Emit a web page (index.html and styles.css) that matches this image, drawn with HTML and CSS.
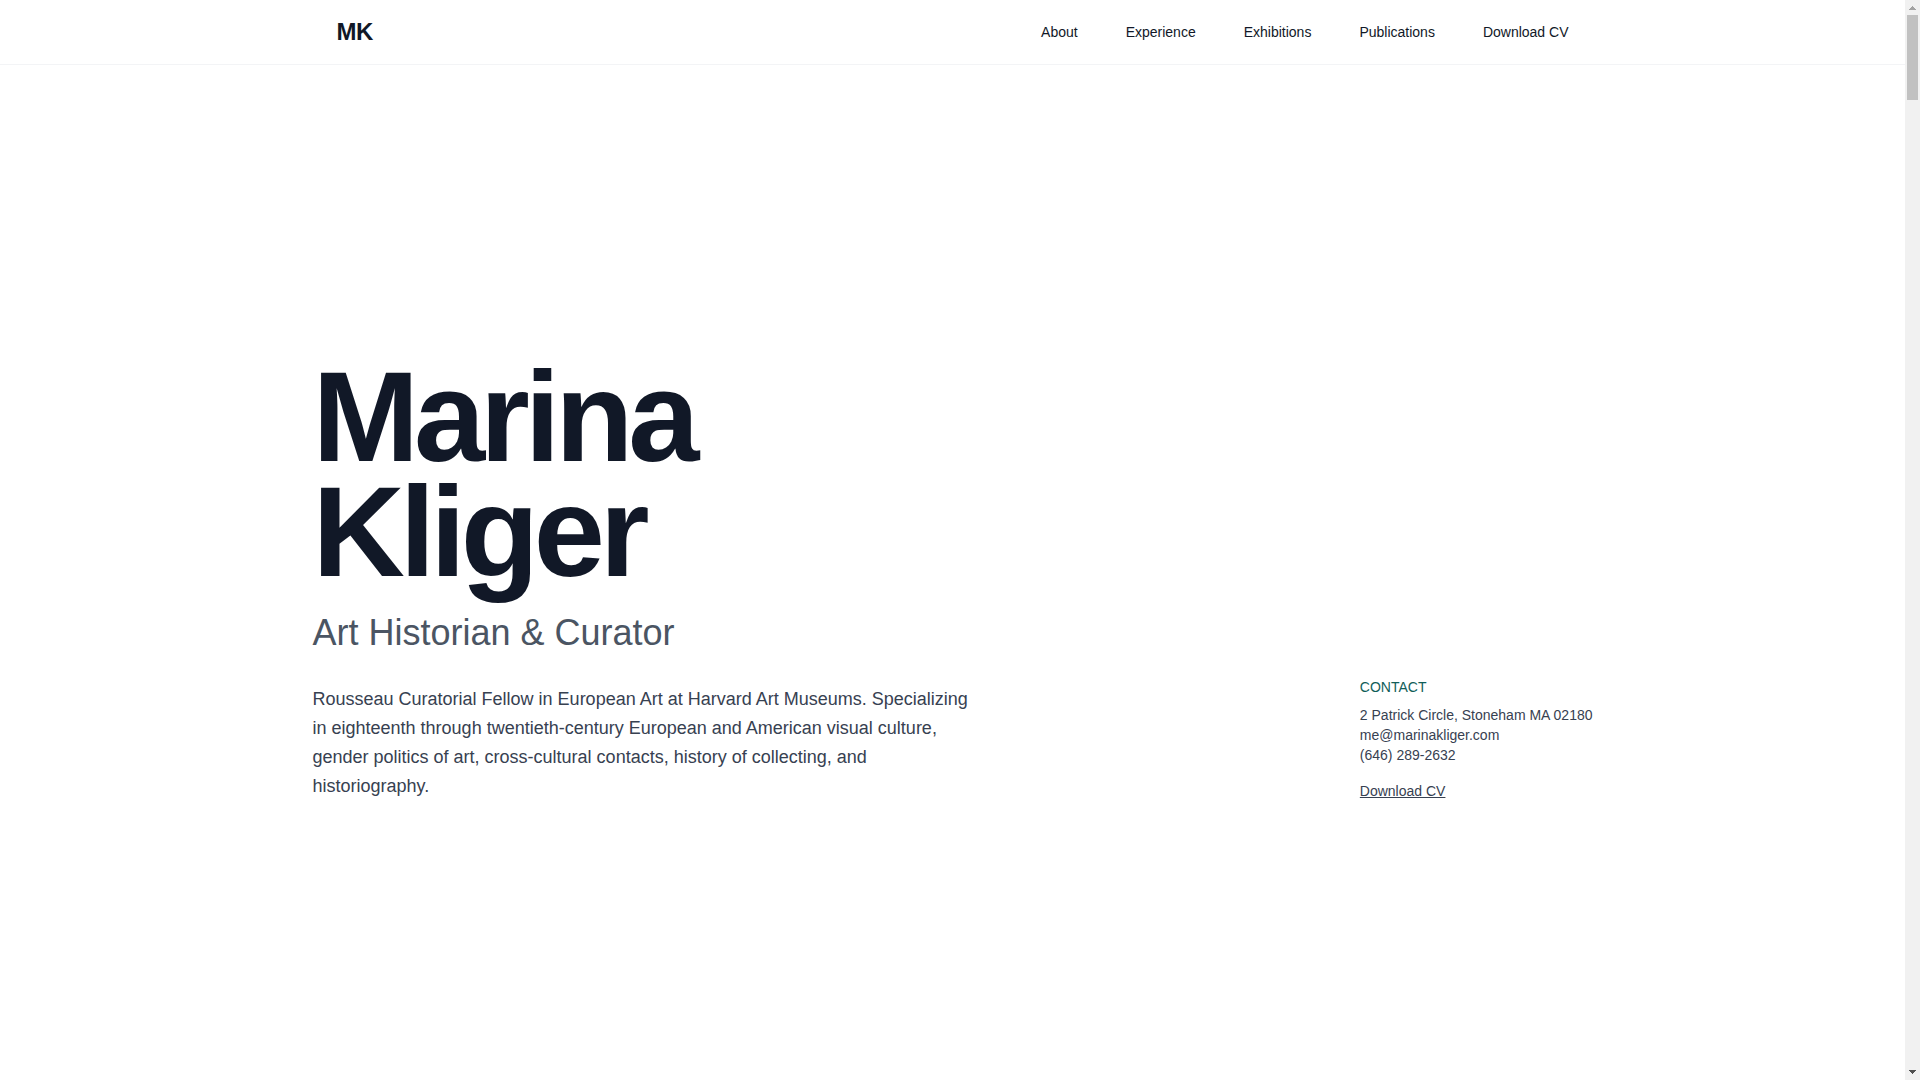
FILE: index.html
```html
<!DOCTYPE html>
<html lang="en">
<head>
  <meta charset="UTF-8" />
  <meta name="viewport" content="width=device-width, initial-scale=1.0" />
  <title>Marina Kliger</title>
  <link rel="stylesheet" href="styles.css">
</head>
<body>

<div class="page">
  <header class="site-header">
    <nav class="nav">
      <a class="logo" href="#top">MK</a>
      <ul class="nav-links">
        <li><a href="#about">About</a></li>
        <li><a href="#experience">Experience</a></li>
        <li><a href="#exhibitions">Exhibitions</a></li>
        <li><a href="#publications">Publications</a></li>
        <li><a href="#cv">Download CV</a></li>
      </ul>
    </nav>
  </header>

  <main class="hero" id="top">
    <div class="hero-inner">
      <div class="intro">
        <h1>Marina<br>Kliger</h1>
        <p class="subtitle">Art Historian &amp; Curator</p>
        <p class="bio">Rousseau Curatorial Fellow in European Art at Harvard Art Museums. Specializing in eighteenth through twentieth-century European and American visual culture, gender politics of art, cross-cultural contacts, history of collecting, and historiography.</p>
      </div>
      <address class="contact">
        <h2>CONTACT</h2>
        <p>2 Patrick Circle, Stoneham MA 02180</p>
        <p>me@marinakliger.com</p>
        <p>(646) 289-2632</p>
        <a class="cv-link" href="#cv">Download CV</a>
      </address>
    </div>
  </main>
</div>

<div class="scrollbar" aria-hidden="true">
  <svg class="arrow arrow-up" width="15" height="15" viewBox="0 0 15 15" shape-rendering="crispEdges"><path d="M7 6h1v1h1v1h1v1h1v1H4V9h1V8h1V7h1z"/></svg>
  <div class="track"><div class="thumb"></div></div>
  <svg class="arrow arrow-down" width="15" height="15" viewBox="0 0 15 15" shape-rendering="crispEdges"><path d="M4 5h7v1h-1v1H9v1H8v1H7V8H6V7H5V6H4z"/></svg>
</div>

</body>
</html>
```
FILE: styles.css
```css
* {
  box-sizing: border-box;
  margin: 0;
  padding: 0;
}

body {
  display: flex;
  min-height: 100vh;
  font-family: "Liberation Sans", Arial, Helvetica, sans-serif;
  font-size: 14px;
  line-height: 20px;
  color: #111827;
  background-color: #ffffff;
}

a {
  color: inherit;
  text-decoration: none;
}

.page {
  flex: 1;
  display: flex;
  flex-direction: column;
}

/* Header */
.site-header {
  border-bottom: 1px solid #f3f4f6;
}

.nav {
  display: flex;
  justify-content: space-between;
  align-items: center;
  max-width: 1280px;
  margin: 0 auto;
  padding: 16px 24px;
}

.logo {
  font-size: 24px;
  line-height: 32px;
  font-weight: bold;
  letter-spacing: -0.025em;
}

.nav-links {
  display: flex;
  gap: 48px;
  list-style: none;
}

/* Hero */
.hero {
  flex: 1;
  display: flex;
  align-items: center;
  padding-top: 15px;
}

.hero-inner {
  display: flex;
  justify-content: space-between;
  align-items: flex-end;
  width: 100%;
  max-width: 1280px;
  margin: 0 auto;
}

h1 {
  font-size: 128px;
  line-height: 0.9;
  letter-spacing: -0.04em;
  margin-bottom: 24px;
}

.subtitle {
  font-size: 36px;
  line-height: 40px;
  color: #4b5563;
  margin-bottom: 32px;
}

.bio {
  max-width: 672px;
  font-size: 18px;
  line-height: 29px;
  color: #374151;
}

.contact {
  font-style: normal;
  color: #374151;
}

.contact h2 {
  font-size: 14px;
  font-weight: normal;
  color: #115e59;
  margin-bottom: 8px;
}

.cv-link {
  display: inline-block;
  margin-top: 16px;
  text-decoration: underline;
}

/* Scrollbar */
.scrollbar {
  display: flex;
  flex-direction: column;
  width: 15px;
  background-color: #f1f1f1;
}

.track {
  flex: 1;
  padding: 0 2px;
}

.thumb {
  height: 85px;
  background-color: #c1c1c1;
}

.arrow {
  display: block;
}

.arrow-up {
  fill: #a3a3a3;
}

.arrow-down {
  fill: #505050;
}
```
